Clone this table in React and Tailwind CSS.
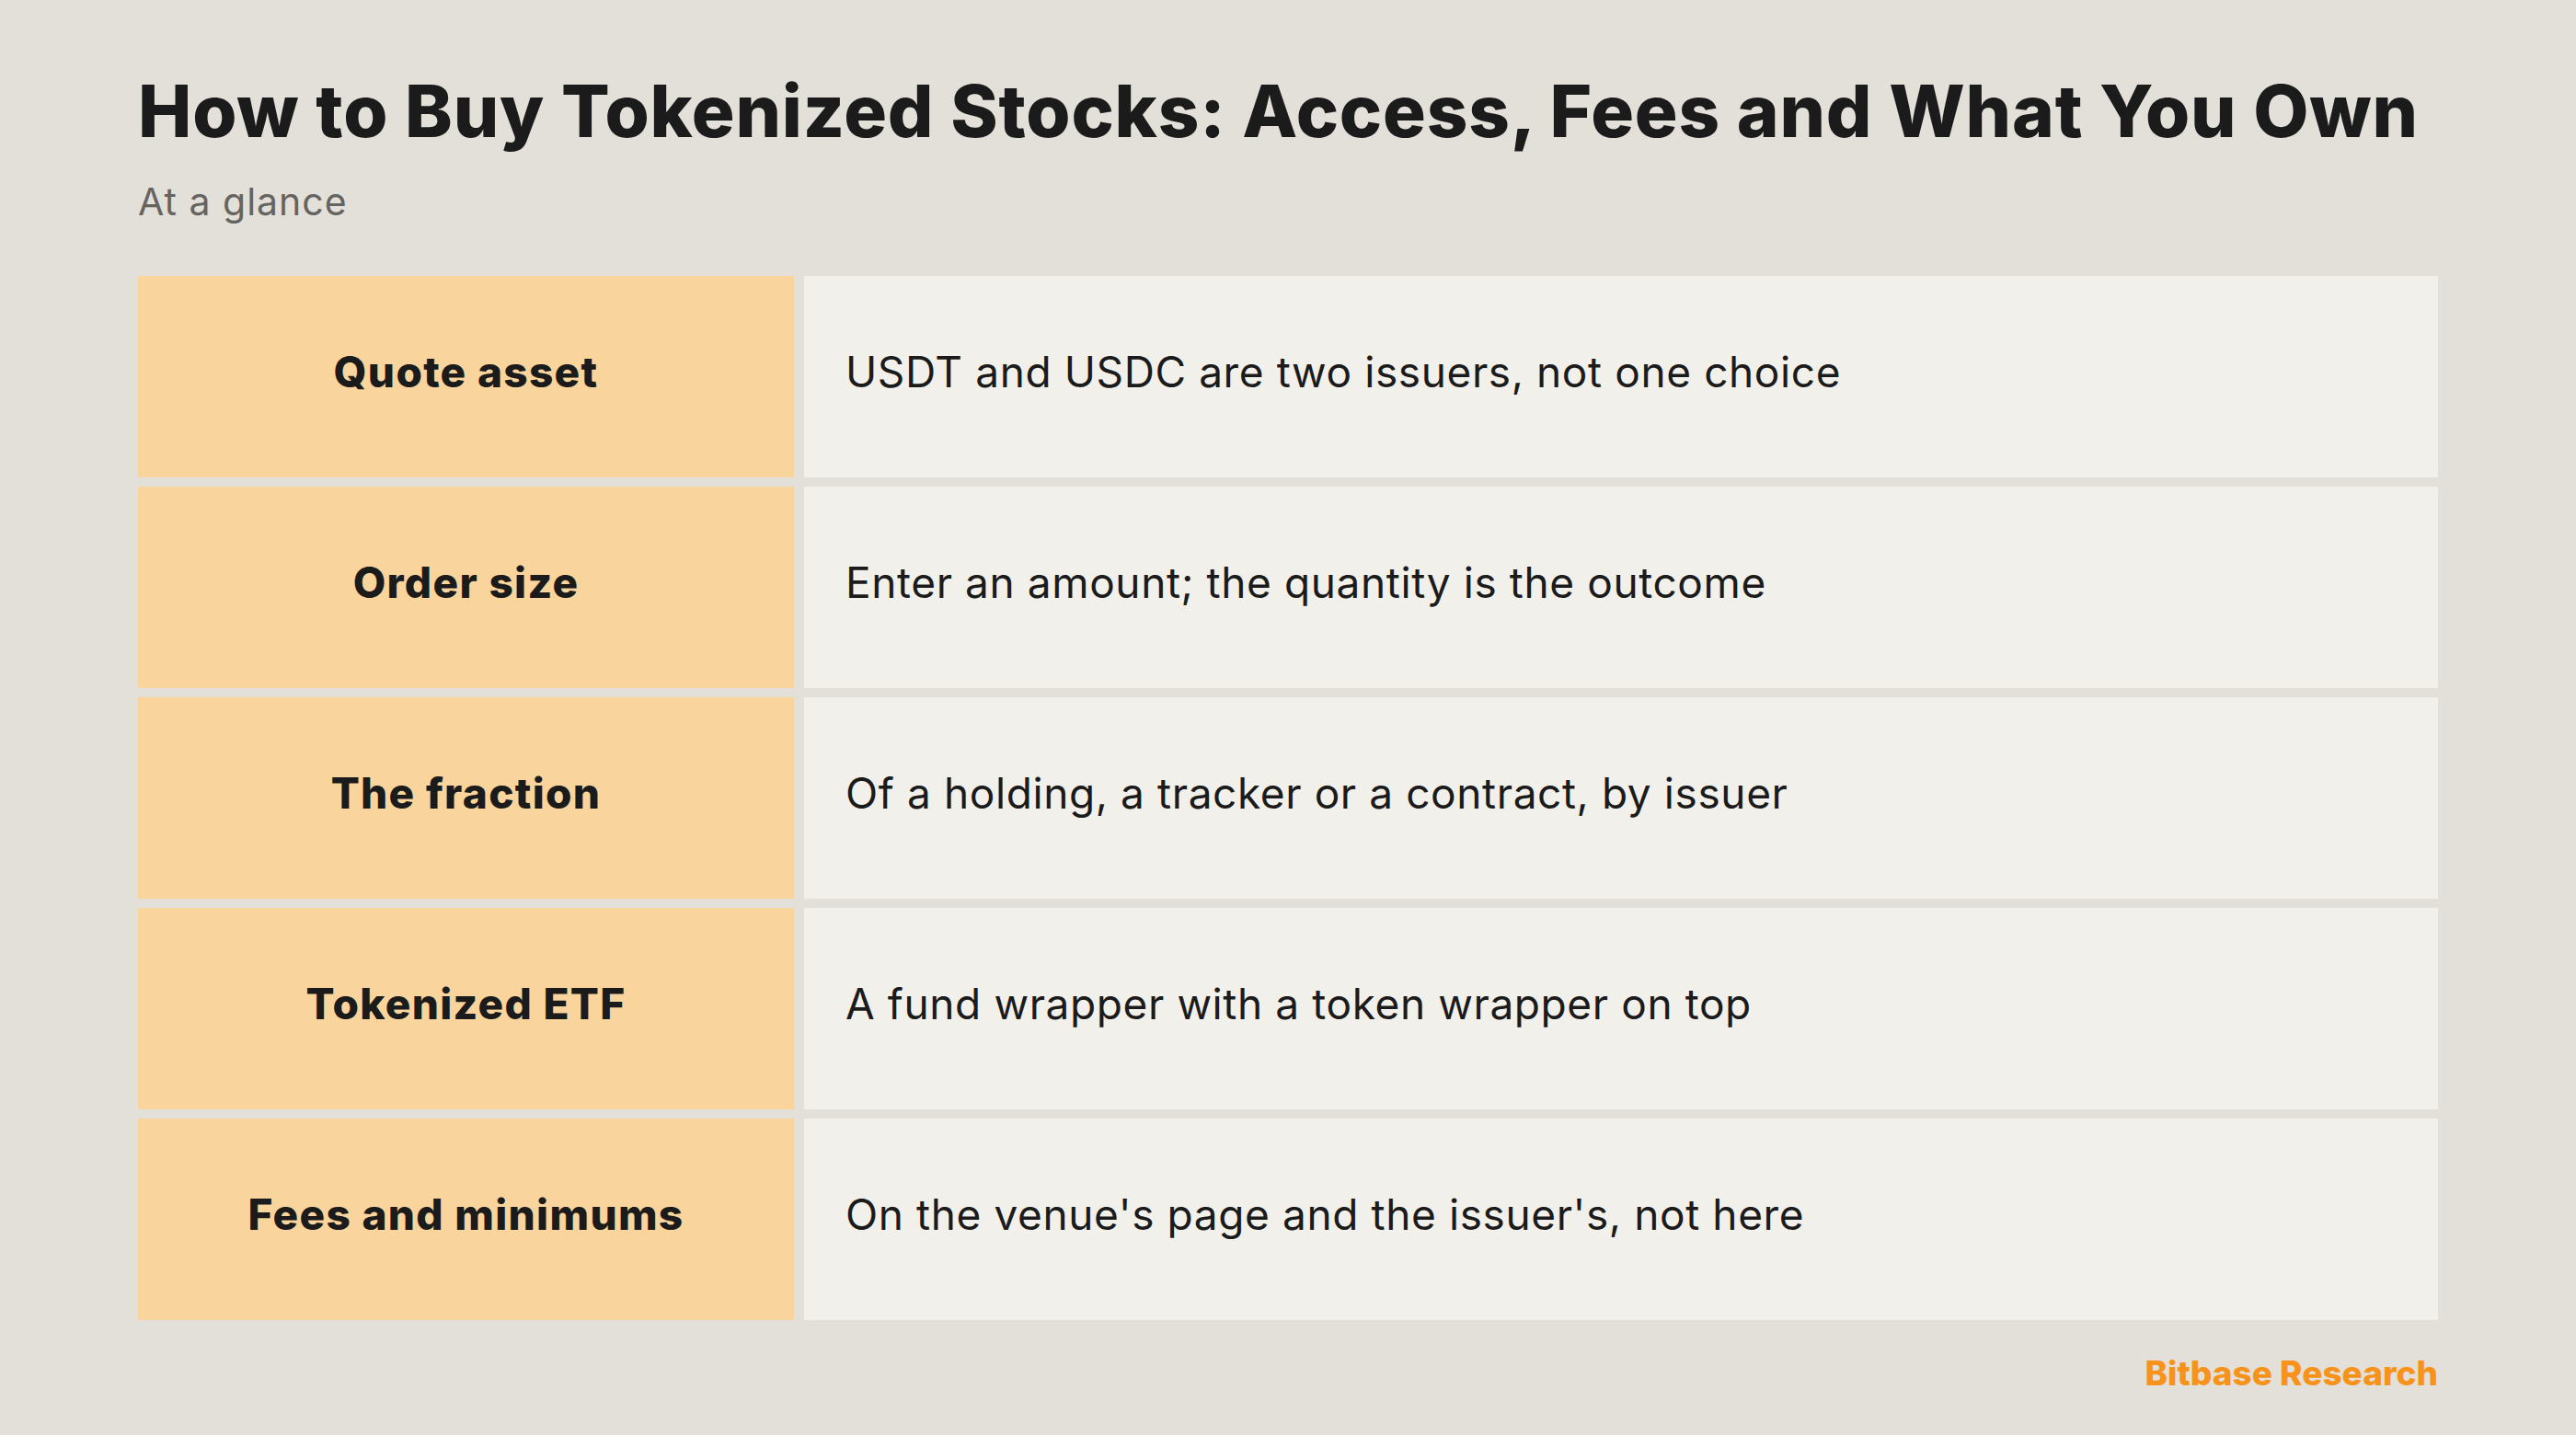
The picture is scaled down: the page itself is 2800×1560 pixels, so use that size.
const rows = [
  { label: "Quote asset", value: "USDT and USDC are two issuers, not one choice" },
  { label: "Order size", value: "Enter an amount; the quantity is the outcome" },
  { label: "The fraction", value: "Of a holding, a tracker or a contract, by issuer" },
  { label: "Tokenized ETF", value: "A fund wrapper with a token wrapper on top" },
  { label: "Fees and minimums", value: "On the venue's page and the issuer's, not here" },
];

const App = () => {
  return (
    <div
      className="w-[2800px] h-[1560px] bg-[#e3dfd9] px-[150px] pt-[82px] text-[#1b1b1b] flex flex-col"
      style={{ fontFamily: "Inter, 'Noto Sans', sans-serif" }}
    >
      <h1 className="text-[78px] leading-none font-extrabold tracking-[0.8px]">
        How to Buy Tokenized Stocks: Access, Fees and What You Own
      </h1>
      <p className="mt-[39px] text-[41px] leading-none tracking-[1px] text-[#666461]">At a glance</p>

      <div className="mt-[60px] flex flex-col gap-[10px]">
        {rows.map((row) => (
          <div key={row.label} className="grid grid-cols-[713px_1fr] gap-[11px] h-[219px]">
            <div className="bg-[#f9d49c] flex items-center justify-center pb-[10px]">
              <span className="text-[46px] font-extrabold tracking-[1.3px]">{row.label}</span>
            </div>
            <div className="bg-[#f2f0ea] flex items-center pl-[45px] pb-[10px]">
              <span className="text-[46px] tracking-[0.6px]">{row.value}</span>
            </div>
          </div>
        ))}
      </div>

      <div className="mt-[30px] flex justify-end">
        <span className="text-[37px] font-extrabold text-[#f7931a]">Bitbase Research</span>
      </div>
    </div>
  );
};

export default App;
